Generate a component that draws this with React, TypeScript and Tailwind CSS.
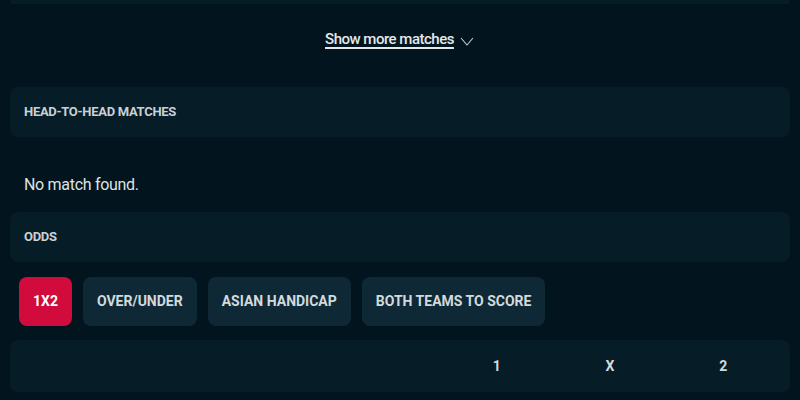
import React from 'react'

const chips = ['1X2', 'OVER/UNDER', 'ASIAN HANDICAP', 'BOTH TEAMS TO SCORE']

function App() {
  return (
    <main className="w-[800px] h-[400px] overflow-hidden bg-[#02141d] px-[10px] font-['Roboto',sans-serif] text-[#d9dfe2]">
      <div className="h-[4px] rounded-b-lg bg-[#061c26]" />
      <div className="flex justify-center items-center h-[70px] pt-[1px]">
        <a href="#" className="flex items-center gap-1 text-[15px] font-medium tracking-[-0.5px] text-[#e4e8ea] underline underline-offset-[3px] decoration-[1.5px]">
          Show more matches
          <svg width="16" height="16" viewBox="0 0 16 16" className="ml-[1px] mt-[2px]" fill="none" stroke="#c9d0d4" strokeWidth="1.1">
            <path d="M2 5l6 7 6-7" />
          </svg>
        </a>
      </div>
      <div className="mt-[13px] h-[50px] rounded-lg bg-[#061d28] flex items-center px-[14px]">
        <h2 className="text-[13px] font-bold tracking-[-0.3px] text-[#c9d1d5]">HEAD-TO-HEAD MATCHES</h2>
      </div>
      <p className="h-[75px] flex items-center px-[14px] pt-[21px] text-[16px] tracking-[-0.3px] text-[#dde3e6]">No match found.</p>
      <div className="h-[50px] rounded-lg bg-[#061d28] flex items-center px-[14px]">
        <h2 className="text-[13px] font-bold tracking-[-0.3px] text-[#c9d1d5]">ODDS</h2>
      </div>
      <div className="flex gap-[11px] mt-[15px] px-[9px]">
        {chips.map((c, i) => (
          <button
            key={c}
            className={
              i === 0
                ? 'h-[49px] px-[14px] rounded-lg bg-[#d20b3d] text-white text-[14px] font-bold'
                : 'h-[49px] px-[14px] rounded-lg bg-[#0e2935] text-[#d3dadd] text-[14px] font-bold'
            }
          >
            {c}
          </button>
        ))}
      </div>
      <div className="mt-[14px] h-[52px] rounded-lg bg-[#061d28] grid grid-cols-[430px_1fr_1fr_1fr] items-center text-[14px] font-bold text-[#d3dadd] pr-[10px]">
        <span />
        <span className="text-center">1</span>
        <span className="text-center">X</span>
        <span className="text-center">2</span>
      </div>
    </main>
  )
}

export default App
